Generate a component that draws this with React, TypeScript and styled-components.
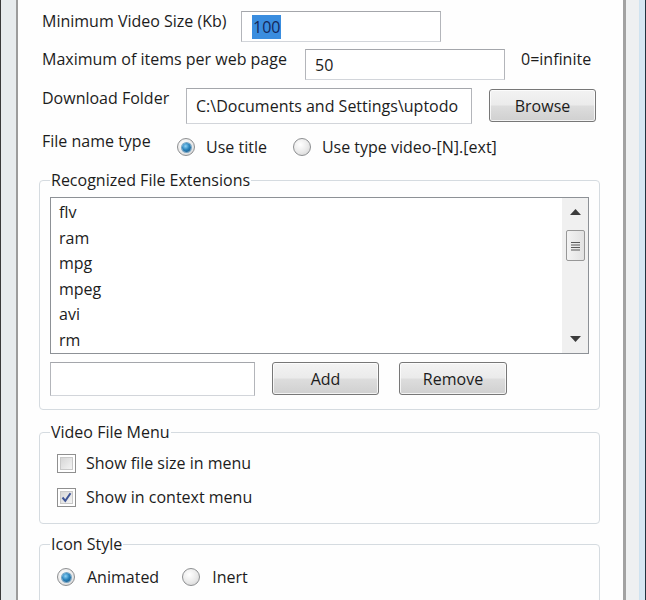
import styled, { createGlobalStyle } from 'styled-components';

const GlobalStyle = createGlobalStyle`
  html, body {
    margin: 0;
    padding: 0;
    background: #ffffff;
  }
  body {
    font-family: 'Open Sans', 'Noto Sans', 'Liberation Sans', sans-serif;
    font-size: 16px;
    color: #1c1c1c;
  }
`;

const Window = styled.div`
  display: flex;
  width: 646px;
  height: 600px;
  overflow: hidden;
`;

const LeftFrame = styled.div`
  width: 15px;
  flex: none;
  background: #e7ebed;
  border-left: 1px solid #3a3a3a;
  border-right: 2px solid #9c9c9c;
`;

const RightFrame = styled.div`
  width: 14px;
  flex: none;
  background: #eef0f1;
  border-left: 3px solid #a2a2a2;
  border-right: 6px solid #d6e6f2;
  box-shadow: inset -1px 0 0 #cfe3f0;
  position: relative;
  &::after {
    content: '';
    position: absolute;
    right: -6px;
    top: 0;
    bottom: 0;
    width: 1px;
    background: #23323f;
  }
`;

const Content = styled.div`
  flex: 1;
  background: #fefefe;
  padding-left: 21px;
`;

const Row = styled.div<{ top: number }>`
  display: flex;
  align-items: flex-start;
  margin-top: ${(p) => p.top}px;
  padding-left: 3px;
`;

const Label = styled.div<{ w: number }>`
  width: ${(p) => p.w}px;
  flex: none;
  line-height: 20px;
  white-space: nowrap;
`;

const TextBox = styled.div<{ w: number; h: number }>`
  width: ${(p) => p.w}px;
  height: ${(p) => p.h}px;
  box-sizing: border-box;
  flex: none;
  display: flex;
  align-items: center;
  padding-left: 9px;
  border: 1px solid #b3b5ba;
  border-top-color: #a4a6ab;
  border-bottom-color: #d2d5da;
  background: #fff;
  white-space: nowrap;
  overflow: hidden;
`;

const Selected = styled.span`
  background: #3a8ddf;
  color: #15275a;
  padding: 1px 1px;
  margin-left: 1px;
`;

const Hint = styled.div`
  margin-left: 16px;
  line-height: 20px;
`;

const Button = styled.button<{ w: number; gap: number }>`
  width: ${(p) => p.w}px;
  height: 33px;
  margin-left: ${(p) => p.gap}px;
  flex: none;
  font: inherit;
  color: #1c1c1c;
  border: 1px solid #777777;
  border-radius: 3px;
  background: linear-gradient(#f3f3f3 0%, #ebebeb 48%, #dddddd 52%, #d0d0d0 100%);
  box-shadow: inset 0 0 0 1px rgba(255, 255, 255, 0.75);
  padding: 0;
`;

const Options = styled.div`
  display: flex;
  gap: 26px;
  padding-top: 6px;
`;

const Option = styled.label<{ gap?: number }>`
  display: flex;
  align-items: center;
  gap: ${(p) => p.gap ?? 11}px;
  line-height: 20px;
  white-space: nowrap;
`;

const Radio = styled.span<{ on?: boolean }>`
  width: 18px;
  height: 18px;
  box-sizing: border-box;
  border-radius: 50%;
  border: 1px solid #8d8f91;
  background: radial-gradient(circle at 40% 35%, #ffffff 0%, #e9e9e9 55%, #cfcfcf 100%);
  display: flex;
  align-items: center;
  justify-content: center;
  flex: none;
  &::after {
    content: '';
    display: ${(p) => (p.on ? 'block' : 'none')};
    width: 9px;
    height: 9px;
    border-radius: 50%;
    background: radial-gradient(circle at 40% 35%, #8fd3f7 0%, #2c85bd 45%, #114a78 100%);
    box-shadow: 0 0 0 1px #7aa6c4;
  }
`;

const Check = styled.span`
  width: 19px;
  height: 19px;
  box-sizing: border-box;
  border: 1px solid #8f8f8f;
  background: #fff;
  padding: 2px;
  flex: none;
  display: flex;
`;

const CheckInner = styled.span`
  flex: 1;
  background: linear-gradient(135deg, #d6d6d6 0%, #f4f4f4 100%);
  border: 1px solid #c9c9c9;
  display: flex;
  align-items: center;
  justify-content: center;
`;

const Group = styled.fieldset<{ top: number; pb?: number }>`
  width: 561px;
  box-sizing: border-box;
  margin: ${(p) => p.top}px 0 0 0;
  padding: 7px 10px ${(p) => p.pb ?? 13}px 10px;
  border: 1px solid #d5dbe0;
  border-radius: 4px;
  min-width: 0;
`;

const Legend = styled.legend`
  padding: 0 1px;
  line-height: 20px;
`;

const ListBox = styled.div`
  display: flex;
  height: 157px;
  box-sizing: border-box;
  border: 1px solid #8d9196;
  background: #fff;
`;

const Items = styled.ul`
  flex: 1;
  list-style: none;
  margin: 0;
  padding: 2px 0 0 8px;
  overflow: hidden;
`;

const Item = styled.li`
  line-height: 25.6px;
`;

const ScrollBar = styled.div`
  width: 26px;
  flex: none;
  background: #f0f0f0;
  display: flex;
  flex-direction: column;
  align-items: center;
  padding: 2px 0;
  box-sizing: border-box;
`;

const Arrow = styled.div`
  height: 24px;
  display: flex;
  align-items: center;
  justify-content: center;
`;

const Thumb = styled.div`
  width: 19px;
  height: 31px;
  margin-top: 6px;
  box-sizing: border-box;
  border: 1px solid #979797;
  border-radius: 2px;
  background: linear-gradient(90deg, #f3f3f3, #e2e2e2);
  display: flex;
  align-items: center;
  justify-content: center;
`;

const Spacer = styled.div`
  flex: 1;
`;

const InputRow = styled.div`
  display: flex;
  align-items: flex-start;
  margin-top: 8px;
`;

const CheckRow = styled.div<{ top: number }>`
  display: flex;
  align-items: center;
  height: 28px;
  margin-top: ${(p) => p.top}px;
  padding-left: 7px;
`;

const OptionRow = styled.div`
  display: flex;
  align-items: center;
  height: 28px;
  margin-top: 2px;
  padding-left: 7px;
  gap: 23px;
`;

const extensions = ['flv', 'ram', 'mpg', 'mpeg', 'avi', 'rm'];

const Tick = () => (
  <svg width="11" height="11" viewBox="0 0 11 11">
    <path d="M1.5 5.5 L4.3 8.8 L9.5 1.2" fill="none" stroke="#3f5596" strokeWidth="2" />
  </svg>
);

export default function App() {
  return (
    <>
      <GlobalStyle />
      <Window>
        <LeftFrame />
        <Content>
          <Row top={11}>
            <Label w={199}>Minimum Video Size (Kb)</Label>
            <TextBox w={200} h={31}>
              <Selected>100</Selected>
            </TextBox>
          </Row>
          <Row top={7}>
            <Label w={263}>Maximum of items per web page</Label>
            <TextBox w={200} h={31}>50</TextBox>
            <Hint>0=infinite</Hint>
          </Row>
          <Row top={8}>
            <Label w={144}>Download Folder</Label>
            <TextBox w={286} h={36}>C:\Documents and Settings\uptodo</TextBox>
            <Button w={107} gap={17} style={{ marginTop: 1 }}>
              Browse
            </Button>
          </Row>
          <Row top={7}>
            <Label w={135}>File name type</Label>
            <Options>
              <Option>
                <Radio on />
                Use title
              </Option>
              <Option>
                <Radio />
                Use type video-[N].[ext]
              </Option>
            </Options>
          </Row>

          <Group top={13}>
            <Legend>Recognized File Extensions</Legend>
            <ListBox>
              <Items>
                {extensions.map((e) => (
                  <Item key={e}>{e}</Item>
                ))}
              </Items>
              <ScrollBar>
                <Arrow>
                  <svg width="11" height="6" viewBox="0 0 11 6">
                    <path d="M0 6 L5.5 0 L11 6 Z" fill="#3c3c3c" />
                  </svg>
                </Arrow>
                <Thumb>
                  <svg width="11" height="10" viewBox="0 0 11 10">
                    <path d="M1 1.5H10M1 4H10M1 6.5H10M1 9H10" stroke="#5a5a5a" strokeWidth="1" />
                  </svg>
                </Thumb>
                <Spacer />
                <Arrow>
                  <svg width="11" height="6" viewBox="0 0 11 6">
                    <path d="M0 0 L5.5 6 L11 0 Z" fill="#3c3c3c" />
                  </svg>
                </Arrow>
              </ScrollBar>
            </ListBox>
            <InputRow>
              <TextBox w={205} h={34} />
              <Button w={107} gap={17}>
                Add
              </Button>
              <Button w={108} gap={20}>
                Remove
              </Button>
            </InputRow>
          </Group>

          <Group top={12} pb={12}>
            <Legend>Video File Menu</Legend>
            <CheckRow top={0}>
              <Option gap={10}>
                <Check>
                  <CheckInner />
                </Check>
                Show file size in menu
              </Option>
            </CheckRow>
            <CheckRow top={6}>
              <Option gap={10}>
                <Check>
                  <CheckInner>
                    <Tick />
                  </CheckInner>
                </Check>
                Show in context menu
              </Option>
            </CheckRow>
          </Group>

          <Group top={10}>
            <Legend>Icon Style</Legend>
            <OptionRow>
              <Option gap={12}>
                <Radio on />
                Animated
              </Option>
              <Option gap={12}>
                <Radio />
                Inert
              </Option>
            </OptionRow>
          </Group>
        </Content>
        <RightFrame />
      </Window>
    </>
  );
}
